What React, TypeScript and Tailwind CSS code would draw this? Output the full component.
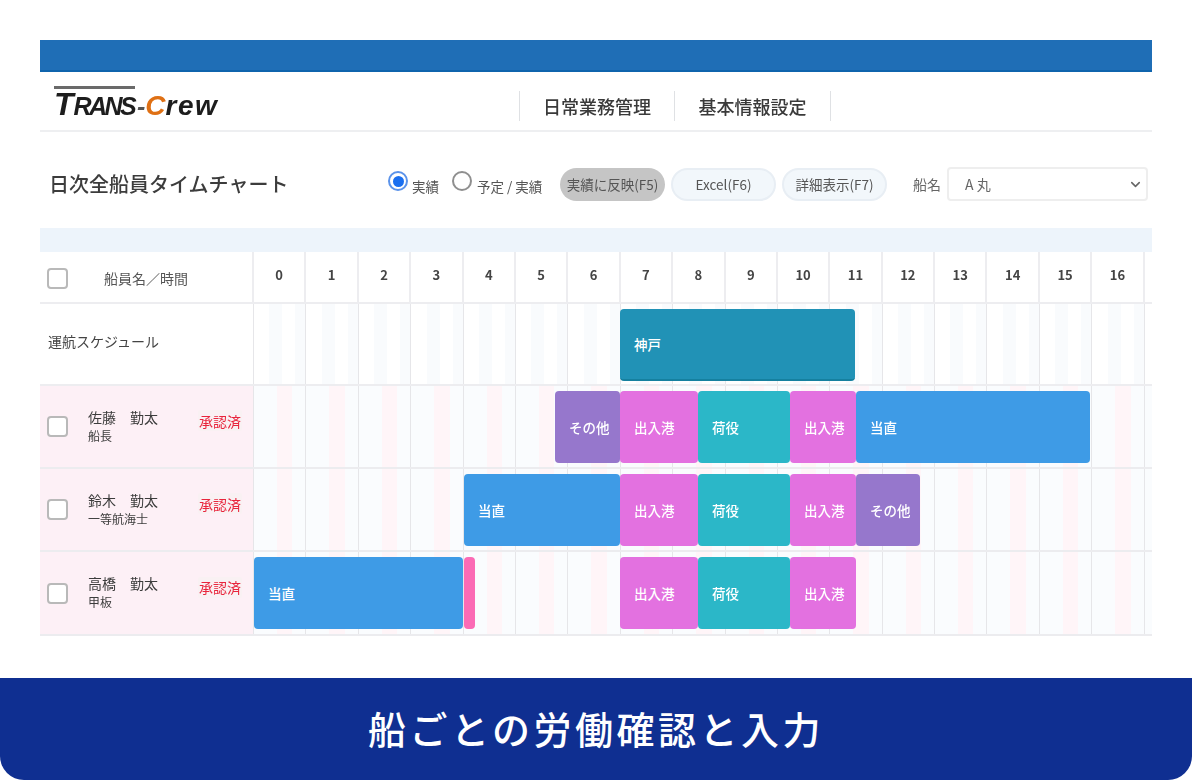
import { ChevronDown } from "lucide-react";

const HOURS = Array.from({ length: 18 }, (_, i) => i);
const HOUR_W = 52.4;

type Bar = { label: string; from: number; to: number; color: string };

const BLUE = "bg-[#3e9be6]";
const MAGENTA = "bg-[#e371e0]";
const TEAL = "bg-[#2bb7c8]";
const PURPLE = "bg-[#9677cc]";

const crew: { name: string; role: string; tall?: boolean; bars: Bar[] }[] = [
  {
    name: "佐藤　勤太",
    role: "船長",
    bars: [
      { label: "その他", from: 555, to: 620, color: PURPLE },
      { label: "出入港", from: 620, to: 698, color: MAGENTA },
      { label: "荷役", from: 698, to: 790, color: TEAL },
      { label: "出入港", from: 790, to: 856, color: MAGENTA },
      { label: "当直", from: 856, to: 1090, color: BLUE },
    ],
  },
  {
    name: "鈴木　勤太",
    role: "一等航海士",
    bars: [
      { label: "当直", from: 464, to: 620, color: BLUE },
      { label: "出入港", from: 620, to: 698, color: MAGENTA },
      { label: "荷役", from: 698, to: 790, color: TEAL },
      { label: "出入港", from: 790, to: 856, color: MAGENTA },
      { label: "その他", from: 856, to: 920, color: PURPLE },
    ],
  },
  {
    name: "高橋　勤太",
    role: "甲板",
    tall: true,
    bars: [
      { label: "当直", from: 254, to: 463, color: BLUE },
      { label: "", from: 464, to: 475, color: "bg-[#fb6bb5]" },
      { label: "出入港", from: 620, to: 698, color: MAGENTA },
      { label: "荷役", from: 698, to: 790, color: TEAL },
      { label: "出入港", from: 790, to: 856, color: MAGENTA },
    ],
  },
];

const Checkbox = () => (
  <div className="h-[21px] w-[21px] shrink-0 rounded-[4px] border-2 border-[#b9b9b9] bg-white" />
);

const GanttBar = ({ bar }: { bar: Bar }) => (
  <div
    className={`absolute top-[5px] flex h-[72px] items-center rounded-[4px] text-[13.5px] font-medium text-white ${bar.color}`}
    style={{ left: bar.from - 254, width: bar.to - bar.from }}
  >
    {bar.label && <span className="ml-[14px] whitespace-nowrap">{bar.label}</span>}
  </div>
);

const Timeline = ({ pink, bars }: { pink?: boolean; bars: Bar[] }) => (
  <div className="relative flex flex-1 overflow-hidden">
    {HOURS.map((h) => (
      <div
        key={h}
        className={`shrink-0 border-r border-[#e6e6e9] ${
          pink
            ? "bg-[linear-gradient(90deg,#fafcfe_0_45%,#fff5f8_45%_75%,#fafcfe_75%)]"
            : "bg-[linear-gradient(90deg,#ffffff_0_30%,#f9fbfd_30%_55%,#ffffff_55%_80%,#f9fbfd_80%)]"
        }`}
        style={{ width: HOUR_W }}
      />
    ))}
    {bars.map((b, i) => (
      <GanttBar key={i} bar={b} />
    ))}
  </div>
);

const App = () => {
  return (
    <div className="flex h-[780px] w-[1192px] flex-col bg-white font-['Noto_Sans_CJK_JP','Noto_Sans',sans-serif]">
      <div className="flex-1 overflow-hidden px-10 pt-10 blur-[0.5px]">
        {/* Top bar */}
        <div className="h-8 border-b-2 border-[#0f64ad] bg-[#1f6eb6]" />

        {/* Logo + nav */}
        <div className="flex h-[60px] items-center border-b-2 border-[#eeeff1]">
          <div className="relative ml-[13px] mt-[5px] flex w-[466px] items-baseline font-['Liberation_Sans',sans-serif] font-bold italic leading-none text-[#1d1d1d]">
            <div className="absolute -top-[2px] left-[1px] h-[3px] w-[81px] bg-[#6a6a6a]" />
            <span className="ml-[1px] text-[32px]">T</span>
            <span className="text-[25px] tracking-[-2.6px]">RANS</span>
            <span className="ml-[3px] text-[25px] text-[#555]">-</span>
            <span className="text-[28px] text-[#df7014]">C</span>
            <span className="text-[28px] tracking-[1.5px]">rew</span>
          </div>
          <div className="mt-[10px] flex h-[30px] items-center border-x border-[#dfe1e4] text-[18px] font-medium text-[#3a3a3a]">
            <div className="flex h-full w-[155px] items-center justify-center border-r border-[#dfe1e4]">日常業務管理</div>
            <div className="flex h-full w-[155px] items-center justify-center">基本情報設定</div>
          </div>
        </div>

        {/* Title + controls */}
        <div className="flex h-[96px] items-center pl-[9px] pr-1 pt-2">
          <h1 className="w-[339px] text-[20px] font-medium leading-none text-[#3c3c3c]">日次全船員タイムチャート</h1>
          <div className="flex w-[172px] items-center text-[13.5px] leading-none text-[#555]">
            <div className="mb-[6px] flex h-5 w-5 shrink-0 items-center justify-center rounded-full border-2 border-[#5b93ea]">
              <div className="h-[11px] w-[11px] rounded-full bg-[#1a6ff0]" />
            </div>
            <span className="ml-[4px] mt-[6px] w-[40px] shrink-0">実績</span>
            <div className="mb-[6px] h-5 w-5 shrink-0 rounded-full border-2 border-[#8f8f8f]" />
            <span className="ml-[5px] mt-[6px] whitespace-nowrap">予定 / 実績</span>
          </div>
          <div className="flex items-center gap-[6px] text-[13.5px] text-[#555]">
            <div className="flex h-[33px] w-[105px] items-center justify-center rounded-full bg-[#c5c5c5] whitespace-nowrap">実績に反映(F5)</div>
            <div className="flex h-[33px] w-[105px] items-center justify-center rounded-full border-2 border-[#e8eef4] bg-[#f2f7fb] whitespace-nowrap">Excel(F6)</div>
            <div className="flex h-[33px] w-[105px] items-center justify-center rounded-full border-2 border-[#e8eef4] bg-[#f2f7fb] whitespace-nowrap">詳細表示(F7)</div>
          </div>
          <span className="ml-[26px] w-[34px] text-[14px] text-[#666]">船名</span>
          <div className="flex h-[34px] flex-1 items-center justify-between rounded-[4px] border-2 border-[#eeeeee] pl-4 pr-[3px] text-[14px] text-[#666]">
            <span>A 丸</span>
            <ChevronDown size={15} strokeWidth={2.5} />
          </div>
        </div>

        <div className="h-6 bg-[#edf4fb]" />

        {/* Table header */}
        <div className="flex h-[52px] border-b-2 border-[#ededf0]">
          <div className="flex w-[214px] shrink-0 items-center border-r-2 border-[#ededf0] pl-[7px] pt-[3px] text-[14px] text-[#555]">
            <Checkbox />
            <span className="ml-[36px]">船員名／時間</span>
          </div>
          <div className="flex flex-1 overflow-hidden">
            {HOURS.map((h) => (
              <div
                key={h}
                className="flex shrink-0 items-center justify-center border-r-2 border-[#ededf0] pb-1 text-[13px] font-semibold text-[#444]"
                style={{ width: HOUR_W }}
              >
                {h < 17 && h}
              </div>
            ))}
          </div>
        </div>

        {/* Schedule row */}
        <div className="flex h-[82px] border-b-2 border-[#ededf0]">
          <div className="flex w-[214px] shrink-0 items-center border-r border-[#e6e6e9] pb-[5px] pl-2 text-[14px] text-[#444]">運航スケジュール</div>
          <Timeline bars={[{ label: "神戸", from: 620, to: 855, color: "border-b-2 border-[#15809f] bg-[#2192b6]" }]} />
        </div>

        {/* Crew rows */}
        {crew.map((c) => (
          <div key={c.name} className={`flex border-b-2 border-[#ececef] ${c.tall ? "h-[84px]" : "h-[83px]"}`}>
            <div className="flex w-[214px] shrink-0 items-center border-r border-[#e6e6e9] bg-[#fdf0f6] pl-[7px]">
              <Checkbox />
              <div className="ml-[20px] w-[110px] self-start pt-[21px] text-[#3c3c3c]">
                <div className="text-[14px] leading-[20px]">{c.name}</div>
                <div className="text-[12px] leading-[18px]">{c.role}</div>
              </div>
              <div className="mb-[12px] flex h-[21px] w-[44px] items-center justify-center rounded-[2px] bg-[#f9f1f3] text-[14px] leading-none whitespace-nowrap text-[#e8253c]">
                承認済
              </div>
            </div>
            <Timeline pink bars={c.bars} />
          </div>
        ))}
      </div>

      {/* Caption */}
      <div className="flex h-[102px] items-center justify-center rounded-b-[24px] bg-[#0f2f91] pb-1 text-[38px] font-medium tracking-[3.5px] text-white">
        船ごとの労働確認と入力
      </div>
    </div>
  );
};

export default App;
